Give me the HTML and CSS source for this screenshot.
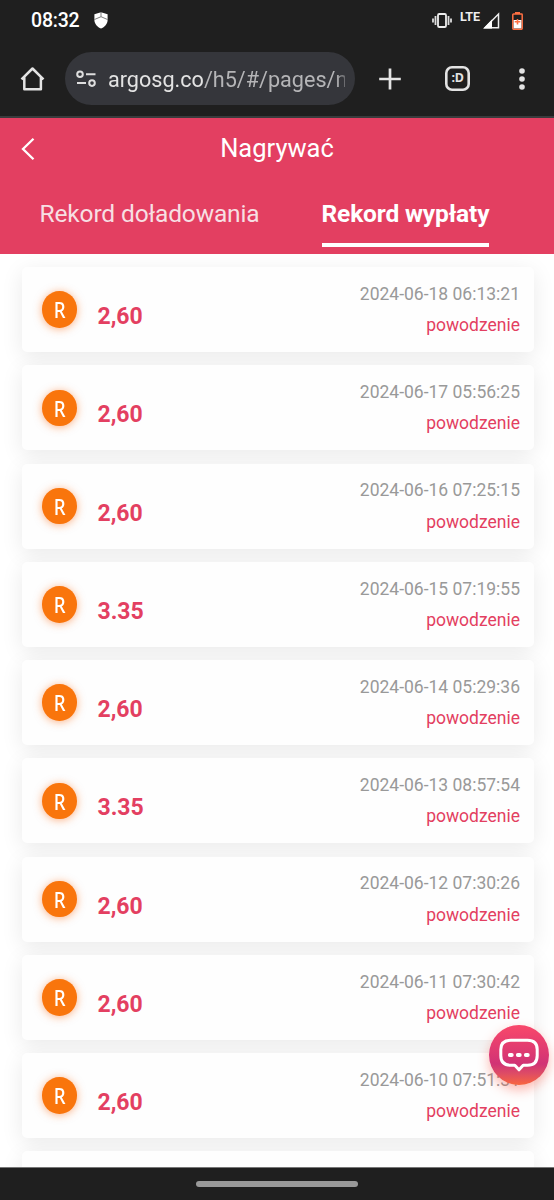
FILE: index.html
```html
<!DOCTYPE html>
<html lang="pl">
<head>
<meta charset="utf-8">
<title>Nagrywać</title>
<link rel="stylesheet" href="styles.css">
</head>
<body>
<div class="phone">
  <header class="system">
    <div class="status">
      <span class="clock">08:32</span>
      <svg class="shield" width="14" height="17" viewBox="0 0 14 17"><path d="M7 .3 13.600 2.300V8C13.600 12 10.500 15 7 16.600 3.500 15 .4 12 .4 8V2.300Z" fill="#fff"/><path d="M7 0v4.500M.5 7.500 7 4.700l6.500 2.800" fill="none" stroke="#444" stroke-width=".7"/></svg>
      <span class="grow"></span>
      <svg class="vibrate" width="20" height="15" viewBox="0 0 20 15"><rect x="6" y="1" width="8" height="13" rx="1.300" fill="none" stroke="#eee" stroke-width="1.800"/><path d="M3.500 3v9M16.500 3v9M1 5.500v4M19 5.500v4" stroke="#ddd" stroke-width="1.800"/></svg>
      <span class="lte">LTE</span>
      <svg class="signal" width="17" height="17" viewBox="0 0 17 17"><path d="M2 15.700 15.500 2v13.700Z" fill="none" stroke="#eee" stroke-width="1.500"/><path d="M.3 16.500 9 7.500v9Z" fill="#fff"/></svg>
      <svg class="battery" width="11" height="18" viewBox="0 0 11 18"><path d="M3 0h5v2H3z" fill="#ff7043"/><rect x=".8" y="2" width="9.400" height="15.200" rx=".7" fill="#1f1f1f" stroke="#ff7043" stroke-width="1.500"/><path d="M1.600 8h7.800v8.400H1.600z" fill="#fff"/><path d="M5.500 7v5.600M2.700 9.800h5.600" stroke="#ff7043" stroke-width="1.600"/></svg>
    </div>
    <div class="toolbar">
      <svg class="home" width="26" height="26" viewBox="0 0 26 26"><path d="M1.500 13.300 12.500 2.500l11 10.800M4.300 11v12.300h16.600V11" fill="none" stroke="#e3e3e3" stroke-width="2.500" stroke-linejoin="round"/></svg>
      <div class="address">
        <svg class="tune" width="21" height="18" viewBox="0 0 21 18"><g fill="none" stroke="#dedede" stroke-width="2"><circle cx="4" cy="4.300" r="2.800"/><path d="M10 4.300H19.500M1 13.100h9"/><circle cx="16" cy="13.100" r="2.800"/></g></svg>
        <span class="url">argosg.co<span class="path">/h5/#/pages/n</span></span>
      </div>
      <svg class="plus" width="22" height="22" viewBox="0 0 22 22"><path d="M11 .5v21M.2 11h21.600" stroke="#e3e3e3" stroke-width="2.700"/></svg>
      <div class="tabs-button">:D</div>
      <svg class="menu" width="6" height="24" viewBox="0 0 6 24"><g fill="#e3e3e3"><circle cx="3" cy="4" r="2.800"/><circle cx="3" cy="12" r="2.800"/><circle cx="3" cy="20" r="2.800"/></g></svg>
    </div>
  </header>
  <section class="head">
    <div class="titlebar">
      <svg class="back" width="14" height="24" viewBox="0 0 14 24"><path d="M12.500 1.700 2 12l10.500 10.300" fill="none" stroke="#fff" stroke-width="2.300"/></svg>
      <h1 class="title">Nagrywać</h1>
    </div>
    <nav class="tabs">
      <span class="tab">Rekord doładowania</span>
      <span class="tab active">Rekord wypłaty</span>
    </nav>
  </section>
  <main class="list">
    <article class="card"><span class="coin"><span class="letter">R</span></span><strong class="amount">2,60</strong><div class="info"><time>2024-06-18 06:13:21</time><span class="state">powodzenie</span></div></article>
    <article class="card"><span class="coin"><span class="letter">R</span></span><strong class="amount">2,60</strong><div class="info"><time>2024-06-17 05:56:25</time><span class="state">powodzenie</span></div></article>
    <article class="card"><span class="coin"><span class="letter">R</span></span><strong class="amount">2,60</strong><div class="info"><time>2024-06-16 07:25:15</time><span class="state">powodzenie</span></div></article>
    <article class="card"><span class="coin"><span class="letter">R</span></span><strong class="amount">3.35</strong><div class="info"><time>2024-06-15 07:19:55</time><span class="state">powodzenie</span></div></article>
    <article class="card"><span class="coin"><span class="letter">R</span></span><strong class="amount">2,60</strong><div class="info"><time>2024-06-14 05:29:36</time><span class="state">powodzenie</span></div></article>
    <article class="card"><span class="coin"><span class="letter">R</span></span><strong class="amount">3.35</strong><div class="info"><time>2024-06-13 08:57:54</time><span class="state">powodzenie</span></div></article>
    <article class="card"><span class="coin"><span class="letter">R</span></span><strong class="amount">2,60</strong><div class="info"><time>2024-06-12 07:30:26</time><span class="state">powodzenie</span></div></article>
    <article class="card"><span class="coin"><span class="letter">R</span></span><strong class="amount">2,60</strong><div class="info"><time>2024-06-11 07:30:42</time><span class="state">powodzenie</span></div></article>
    <article class="card"><span class="coin"><span class="letter">R</span></span><strong class="amount">2,60</strong><div class="info"><time>2024-06-10 07:51:31</time><span class="state">powodzenie</span></div></article>
    <article class="card"></article>
  </main>
  <div class="chat">
    <svg width="42" height="36" viewBox="0 0 42 36"><path d="M13 3.200H29.500Q39.200 3.200 39.200 12.500V18.500Q39.200 28.300 29.500 28.300H25.200L21 32.800 16.800 28.300H13Q2.800 28.300 2.800 18.500V12.500Q2.800 3.200 13 3.200Z" fill="none" stroke="#fff" stroke-width="3" stroke-linejoin="round"/><path d="M11.800 18h2M19.800 18h2M27.800 18h2" stroke="#fff" stroke-width="3.800" stroke-linecap="round"/></svg>
  </div>
  <footer class="gesture"><span class="handle"></span></footer>
</div>
</body>
</html>
```
FILE: styles.css
```css
* { box-sizing: border-box; }
body { margin: 0; font-family: Roboto, "Liberation Sans", sans-serif; background: #fff; }
svg { display: block; flex: none; }
.phone { position: relative; width: 554px; height: 1200px; display: flex; flex-direction: column; overflow: hidden; }
.system { height: 118px; flex: none; background: #1f1f1f; border-bottom: 2px solid #3b3b3d; }
.status { height: 52px; padding: 0 31px; display: flex; align-items: flex-start; }
.clock { margin-top: 10px; font-size: 19.5px; line-height: 22px; font-weight: 500; color: #fff; letter-spacing: -.2px; }
.shield { margin: 12px 0 0 15px; }
.grow { flex: 1; }
.vibrate { margin-top: 13px; }
.lte { margin: 10px 0 0 8px; width: 21px; font-size: 12.5px; line-height: 13px; font-weight: 700; color: #eee; letter-spacing: -.1px; }
.signal { margin: 12px 0 0 2px; }
.battery { margin: 12px 0 0 12px; }
.toolbar { height: 53px; padding-left: 20px; display: flex; align-items: center; }
.home { margin-right: 19px; }
.address { width: 290px; height: 53px; border-radius: 27px; background: #35363b; display: flex; align-items: center; padding-left: 11px; }
.url { margin-left: 11px; width: 237px; overflow: hidden; white-space: nowrap; font-size: 21.6px; line-height: 30px; color: #e3e3e3; padding-top: 2px; -webkit-mask-image: linear-gradient(90deg, #000 96%, #0006 100%); mask-image: linear-gradient(90deg, #000 96%, #0006 100%); }
.path { color: #b5b5b7; }
.plus { margin-left: 24px; }
.tabs-button { margin-left: 44px; width: 25px; height: 25px; box-shadow: inset 0 0 0 2.6px #e3e3e3; border-radius: 7px; color: #e3e3e3; font: 700 12.5px/24px "Noto Sans", sans-serif; letter-spacing: -.3px; text-align: center; }
.menu { margin-left: 49px; }
.head { height: 136px; flex: none; background: #e33f61; color: #fff; }
.titlebar { height: 60px; padding-left: 21px; display: flex; align-items: center; }
.back { margin-top: 1px; }
.title { margin: 0 35px 0 0; flex: 1; font-size: 25.5px; line-height: 30px; font-weight: 400; text-align: center; }
.tabs { height: 69px; padding-left: 39.500px; display: flex; gap: 62px; }
.tab { font-size: 24.5px; line-height: 30px; padding-top: 21px; height: 69px; color: #f7dfe3; white-space: nowrap; letter-spacing: -.14px; }
.tab.active { font-weight: 700; color: #fff; border-bottom: 4px solid #fff; }
.list { flex: 1; min-height: 0; overflow: hidden; padding: 13.2px 20.500px 0 21.500px; display: flex; flex-direction: column; gap: 13.250px; }
.card { height: 85px; flex: none; border-radius: 5px; background: #fefefe; box-shadow: 0 5px 22px rgba(0,0,0,.085); display: flex; align-items: flex-start; padding: 0 13.500px 0 20.500px; }
.coin { margin-top: 24.300px; width: 34.500px; height: 36.500px; border-radius: 50%; background: #f9750c; box-shadow: 0 1px 8px rgba(249,100,12,.5); color: #fff; font: 500 21.5px/37px "Noto Sans", sans-serif; text-align: center; padding-left: 1px; }
.letter { display: block; transform: scaleX(.87); }
.amount { margin: 35px 0 0 21px; font-size: 23px; line-height: 30px; font-weight: 700; color: #e33f61; }
.info { margin: 14.800px 0 0 auto; display: flex; flex-direction: column; align-items: flex-end; gap: 7.200px; font-size: 17.5px; line-height: 24px; color: #999; }
.state { color: #e33f61; }
.chat { position: absolute; left: 488.500px; top: 1025px; width: 60px; height: 60px; border-radius: 50%; background: linear-gradient(#f9486a, #d13375 65%, #dd4b66 80%, #f9663f); box-shadow: 0 5px 12px rgba(249,80,60,.4); display: flex; align-items: center; justify-content: center; }
.gesture { height: 33px; flex: none; background: #1f1f1f; border-top: 1px solid #777; display: flex; justify-content: center; }
.handle { margin-top: 13px; width: 162px; height: 6px; border-radius: 3px; background: #999; }
```
